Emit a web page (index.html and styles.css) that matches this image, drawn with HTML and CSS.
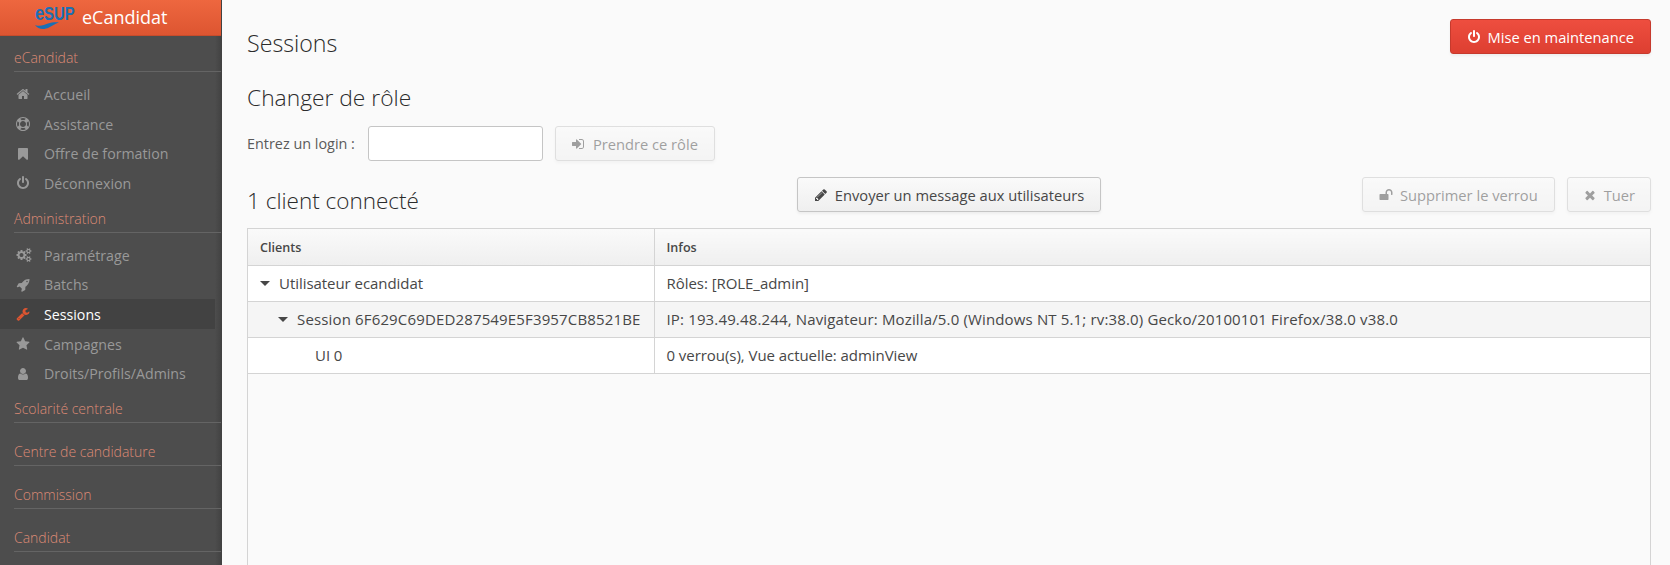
FILE: index.html
```html
<!DOCTYPE html>
<html lang="fr">

<head>
    <meta charset="UTF-8">
    <title>eCandidat</title>
    <link rel="stylesheet" href="styles.css">
</head>

<body>
    <!-- Icones -->
    <svg class="icon-defs" xmlns="http://www.w3.org/2000/svg">
        <symbol id="i-home" viewBox="0 0 1792 1792"><path d="M1472 992v480q0 26-19 45t-45 19h-384v-384h-256v384h-384q-26 0-45-19t-19-45v-480q0-1 .5-3t.5-3l575-474 575 474q1 2 1 6zm223-69l-62 74q-8 9-21 11h-3q-13 0-21-7l-692-577-692 577q-12 8-24 7-13-2-21-11l-62-74q-8-10-7-23.5t11-21.5l719-599q32-26 76-26t76 26l244 204v-195q0-14 9-23t23-9h192q14 0 23 9t9 23v408l219 182q10 8 11 21.5t-7 23.5z"/></symbol>
        <symbol id="i-ring" viewBox="0 0 1792 1792"><path d="M896 0q182 0 348 71t286 191 191 286 71 348-71 348-191 286-286 191-348 71-348-71-286-191-191-286-71-348 71-348 191-286 286-191 348-71zm0 128q-190 0-361 90l194 194q82-28 167-28t167 28l194-194q-171-90-361-90zm-678 1129l194-194q-28-82-28-167t28-167l-194-194q-90 171-90 361t90 361zm678 407q190 0 361-90l-194-194q-82 28-167 28t-167-28l-194 194q171 90 361 90zm0-384q159 0 271.5-112.5t112.5-271.5-112.5-271.5-271.5-112.5-271.5 112.5-112.5 271.5 112.5 271.5 271.5 112.5zm484-217l194 194q90-171 90-361t-90-361l-194 194q28 82 28 167t-28 167z"/></symbol>
        <symbol id="i-bookmark" viewBox="0 0 1792 1792"><path d="M1420 128q23 0 44 9 33 13 52.5 41t19.5 62v1289q0 34-19.5 62t-52.5 41q-19 8-44 8-48 0-83-32l-441-424-441 424q-36 33-83 33-23 0-44-9-33-13-52.5-41t-19.5-62v-1289q0-34 19.5-62t52.5-41q21-9 44-9h1048z"/></symbol>
        <symbol id="i-power" viewBox="0 0 1792 1792"><path d="M1664 896q0 156-61 298t-164 245-245 164-298 61-298-61-245-164-164-245-61-298q0-182 80.5-343t226.5-270q43-32 95.5-25t83.5 50q32 42 24.5 94.5t-49.5 84.5q-98 74-151.5 181t-53.5 228q0 104 40.5 198.5t109.5 163.5 163.5 109.5 198.5 40.5 198.5-40.5 163.5-109.5 109.5-163.5 40.5-198.5q0-121-53.5-228t-151.5-181q-42-32-49.5-84.5t24.5-94.5q31-43 84-50t95 25q146 109 226.5 270t80.5 343zm-640-768v640q0 52-38 90t-90 38-90-38-38-90v-640q0-52 38-90t90-38 90 38 38 90z"/></symbol>
        <symbol id="i-cogs" viewBox="0 0 2048 1792"><path d="M960 896q0-106-75-181t-181-75-181 75-75 181 75 181 181 75 181-75 75-181zm768 512q0-52-38-90t-90-38-90 38-38 90q0 53 37.5 90.5t90.5 37.5 90.5-37.5 37.5-90.5zm0-1024q0-52-38-90t-90-38-90 38-38 90q0 53 37.5 90.5t90.5 37.5 90.5-37.5 37.5-90.5zm-384 421v185q0 10-7 19.5t-16 10.5l-155 24q-11 35-32 76 34 48 90 115 7 11 7 20 0 12-7 19-23 30-82.5 89.5t-78.5 59.5q-11 0-21-7l-115-90q-37 19-77 31-11 108-23 155-7 24-30 24h-186q-11 0-20-7.5t-10-17.5l-23-153q-34-10-75-31l-118 89q-7 7-20 7-11 0-21-8-144-133-144-160 0-9 7-19 10-14 41-53t47-61q-23-44-35-82l-152-24q-10-1-17-9.5t-7-19.5v-185q0-10 7-19.5t16-10.5l155-24q11-35 32-76-34-48-90-115-7-11-7-20 0-12 7-20 22-30 82-89t79-59q11 0 21 7l115 90q34-18 77-32 11-108 23-154 7-24 30-24h186q11 0 20 7.5t10 17.5l23 153q34 10 75 31l118-89q8-7 20-7 11 0 21 8 144 133 144 160 0 8-7 19-12 16-42 54t-45 60q23 48 34 82l152 23q10 2 17 10.5t7 19.5zm640 533v140q0 16-149 31-12 27-30 52 51 113 51 138 0 4-4 7-122 71-124 71-8 0-46-47t-52-68q-20 2-30 2t-30-2q-14 21-52 68t-46 47q-2 0-124-71-4-3-4-7 0-25 51-138-18-25-30-52-149-15-149-31v-140q0-16 149-31 13-29 30-52-51-113-51-138 0-4 4-7 4-2 35-20t59-34 30-16q8 0 46 46.5t52 67.5q20-2 30-2t30 2q51-71 92-112l6-2q4 0 124 70 4 3 4 7 0 25-51 138 17 23 30 52 149 15 149 31zm0-1024v140q0 16-149 31-12 27-30 52 51 113 51 138 0 4-4 7-122 71-124 71-8 0-46-47t-52-68q-20 2-30 2t-30-2q-14 21-52 68t-46 47q-2 0-124-71-4-3-4-7 0-25 51-138-18-25-30-52-149-15-149-31v-140q0-16 149-31 13-29 30-52-51-113-51-138 0-4 4-7 4-2 35-20t59-34 30-16q8 0 46 46.5t52 67.5q20-2 30-2t30 2q51-71 92-112l6-2q4 0 124 70 4 3 4 7 0 25-51 138 17 23 30 52 149 15 149 31z"/></symbol>
        <symbol id="i-rocket" viewBox="0 0 1792 1792"><path d="M1504 448q0-40-28-68t-68-28-68 28-28 68 28 68 68 28 68-28 28-68zm224-288q0 249-75.5 430.5t-253.5 360.5q-81 80-195 176l-20 379q-2 16-16 26l-384 224q-7 4-16 4-12 0-23-9l-64-64q-13-14-8-32l85-276-281-281-276 85q-3 1-9 1-14 0-23-9l-64-64q-17-19-5-39l224-384q10-14 26-16l379-20q96-114 176-195 188-187 358-258t431-71q14 0 24 9.5t10 22.5z"/></symbol>
        <symbol id="i-wrench" viewBox="0 0 1792 1792"><path d="M448 1472q0-26-19-45t-45-19-45 19-19 45 19 45 45 19 45-19 19-45zm644-420l-682 682q-37 37-90 37-52 0-91-37l-106-108q-38-36-38-90 0-53 38-91l681-681q39 98 114.5 173.5t173.5 114.5zm634-435q0 39-23 106-47 134-164.5 217.5t-258.5 83.5q-185 0-316.5-131.5t-131.5-316.5 131.5-316.5 316.5-131.5q58 0 121.5 16.5t107.5 46.5q16 11 16 28t-16 28l-293 169v224l193 107q5-3 79-48.5t135.5-81 70.5-35.5q15 0 23.5 10t8.5 25z"/></symbol>
        <symbol id="i-star" viewBox="0 0 1792 1792"><path d="M1728 647q0 22-26 48l-363 354 86 500q1 7 1 20 0 21-10.5 35.5t-30.5 14.5q-19 0-40-12l-449-236-449 236q-22 12-40 12-21 0-31.5-14.5t-10.5-35.5q0-6 2-20l86-500-364-354q-25-27-25-48 0-37 56-46l502-73 225-455q19-41 49-41t49 41l225 455 502 73q56 9 56 46z"/></symbol>
        <symbol id="i-user" viewBox="0 0 1792 1792"><path d="M1536 1399q0 109-62.5 187t-150.5 78h-854q-88 0-150.5-78t-62.5-187q0-85 8.5-160.5t31.5-152 58.5-131 94-89 134.5-34.5q131 128 313 128t313-128q76 0 134.5 34.5t94 89 58.5 131 31.5 152 8.5 160.5zm-256-887q0 159-112.5 271.5t-271.5 112.5-271.5-112.5-112.5-271.5 112.5-271.5 271.5-112.5 271.5 112.5 112.5 271.5z"/></symbol>
        <symbol id="i-signin" viewBox="0 0 1792 1792"><path d="M1184 896q0 26-19 45l-544 544q-19 19-45 19t-45-19-19-45v-288h-448q-26 0-45-19t-19-45v-384q0-26 19-45t45-19h448v-288q0-26 19-45t45-19 45 19l544 544q19 19 19 45zm352-352v704q0 119-84.5 203.5t-203.5 84.5h-320q-13 0-22.5-9.5t-9.5-22.5q0-4-1-20t-.5-26.5 3-23.5 10-19.5 20.5-6.5h320q66 0 113-47t47-113v-704q0-66-47-113t-113-47h-312l-11.5-1-11.5-3-8-5.5-7-9-2-13.5q0-4-1-20t-.5-26.5 3-23.5 10-19.5 20.5-6.5h320q119 0 203.5 84.5t84.5 203.5z"/></symbol>
        <symbol id="i-pencil" viewBox="0 0 1792 1792"><path d="M491 1536l91-91-235-235-91 91v107h128v128h107zm523-928q0-22-22-22-10 0-17 7l-542 542q-7 7-7 17 0 22 22 22 10 0 17-7l542-542q7-7 7-17zm-54-192l416 416-832 832h-416v-416zm683 96q0 53-37 90l-166 166-416-416 166-165q36-38 90-38 53 0 91 38l235 234q37 39 37 91z"/></symbol>
        <symbol id="i-unlock" viewBox="0 0 1792 1792"><path d="M1728 576v256q0 26-19 45t-45 19h-64q-26 0-45-19t-19-45v-256q0-106-75-181t-181-75-181 75-75 181v192h96q40 0 68 28t28 68v576q0 40-28 68t-68 28h-960q-40 0-68-28t-28-68v-576q0-40 28-68t68-28h672v-192q0-185 131.5-316.5t316.5-131.5 316.5 131.5 131.5 316.5z"/></symbol>
        <symbol id="i-times" viewBox="0 0 1792 1792"><path d="M1490 1322q0 40-28 68l-136 136q-28 28-68 28t-68-28l-294-294-294 294q-28 28-68 28t-68-28l-136-136q-28-28-28-68t28-68l294-294-294-294q-28-28-28-68t28-68l136-136q28-28 68-28t68 28l294 294 294-294q28-28 68-28t68 28l136 136q28 28 28 68t-28 68l-294 294 294 294q28 28 28 68z"/></symbol>
    </svg>

    <div class="app">
        <nav class="sidebar">
            <div class="brand">
                <div class="logo">
                    <span class="logo-text">eSUP</span>
                    <svg class="logo-wave" viewBox="0 0 24 8"><path d="M0 3c5 2 9 0 13-1.500 4-1.500 8-1.500 11-1-4 1-6 3-10 5-5 2.500-11 2-14-2.500z"/></svg>
                </div>
                <span class="brand-name">eCandidat</span>
            </div>

            <div class="nav-section">eCandidat</div>
            <a class="nav-item"><svg class="nav-icon"><use href="#i-home"/></svg>Accueil</a>
            <a class="nav-item"><svg class="nav-icon"><use href="#i-ring"/></svg>Assistance</a>
            <a class="nav-item"><svg class="nav-icon"><use href="#i-bookmark"/></svg>Offre de formation</a>
            <a class="nav-item"><svg class="nav-icon"><use href="#i-power"/></svg>Déconnexion</a>

            <div class="nav-section">Administration</div>
            <a class="nav-item"><svg class="nav-icon nav-icon-wide"><use href="#i-cogs"/></svg>Paramétrage</a>
            <a class="nav-item"><svg class="nav-icon"><use href="#i-rocket"/></svg>Batchs</a>
            <a class="nav-item selected"><svg class="nav-icon"><use href="#i-wrench"/></svg>Sessions</a>
            <a class="nav-item"><svg class="nav-icon"><use href="#i-star"/></svg>Campagnes</a>
            <a class="nav-item"><svg class="nav-icon"><use href="#i-user"/></svg>Droits/Profils/Admins</a>

            <div class="nav-section">Scolarité centrale</div>
            <div class="nav-section closed">Centre de candidature</div>
            <div class="nav-section closed">Commission</div>
            <div class="nav-section closed">Candidat</div>
        </nav>

        <main class="content">
            <div class="top-row">
                <h1>Sessions</h1>
                <button class="btn btn-danger"><svg class="btn-icon"><use href="#i-power"/></svg>Mise en maintenance</button>
            </div>

            <h2>Changer de rôle</h2>
            <div class="login-row">
                <label for="login">Entrez un login :</label>
                <input id="login" type="text">
                <button class="btn" disabled><svg class="btn-icon"><use href="#i-signin"/></svg>Prendre ce rôle</button>
            </div>

            <div class="clients-row">
                <h2 class="clients-title">1 client connecté</h2>
                <button class="btn"><svg class="btn-icon"><use href="#i-pencil"/></svg>Envoyer un message aux utilisateurs</button>
                <div class="clients-actions">
                    <button class="btn" disabled><svg class="btn-icon"><use href="#i-unlock"/></svg>Supprimer le verrou</button>
                    <button class="btn btn-kill" disabled><svg class="btn-icon"><use href="#i-times"/></svg>Tuer</button>
                </div>
            </div>

            <div class="grid-wrap">
                <table class="grid">
                    <thead>
                        <tr>
                            <th class="col-clients">Clients</th>
                            <th>Infos</th>
                        </tr>
                    </thead>
                    <tbody>
                        <tr>
                            <td><span class="tree"><i class="caret"></i>Utilisateur ecandidat</span></td>
                            <td>Rôles: [ROLE_admin]</td>
                        </tr>
                        <tr class="stripe">
                            <td><span class="tree tree-1"><i class="caret"></i>Session 6F629C69DED287549E5F3957CB8521BE</span></td>
                            <td>IP: 193.49.48.244, Navigateur: Mozilla/5.0 (Windows NT 5.1; rv:38.0) Gecko/20100101 Firefox/38.0 v38.0</td>
                        </tr>
                        <tr>
                            <td><span class="tree tree-2">UI 0</span></td>
                            <td>0 verrou(s), Vue actuelle: adminView</td>
                        </tr>
                    </tbody>
                </table>
            </div>
        </main>
    </div>
</body>

</html>
```

FILE: styles.css
```css
html,
body {
    height: 100%;
    margin: 0;
    overflow: hidden;
}

body {
    font-family: 'Open Sans', sans-serif;
    font-size: 14px;
    color: #474747;
    background-color: #fafafa;
}

.icon-defs {
    display: none;
}

.app {
    display: flex;
    height: 100%;
}

/* Menu de gauche */
.sidebar {
    width: 222px;
    flex-shrink: 0;
    background-color: #4d4d4d;
    background-image: linear-gradient(to left, #414141 0, #4d4d4d 7px);
    overflow: hidden;
}

.brand {
    height: 35px;
    width: 221px;
    display: flex;
    align-items: flex-start;
    padding-left: 35px;
    box-sizing: border-box;
    background: linear-gradient(to bottom, #ee673f, #dd5531);
    box-shadow: 0 1px 0 #c74c2c;
    overflow: hidden;
}

.logo {
    width: 40px;
    margin-right: 7px;
    display: flex;
    flex-direction: column;
    align-items: flex-start;
}

.logo-text {
    font-family: 'Liberation Sans', sans-serif;
    font-weight: 700;
    font-size: 19px;
    line-height: 16px;
    margin-top: 5px;
    color: #1b6fb5;
    transform: scaleX(0.78);
    transform-origin: left center;
}

.logo-text::first-letter {
    font-size: 21px;
}

.logo-wave {
    width: 24px;
    height: 8px;
    fill: #1b6fb5;
}

.brand-name {
    font-size: 18px;
    line-height: 35px;
    color: #ffffff;
}

.nav-section {
    margin: 11px 0 7px 14px;
    height: 23px;
    width: 207px;
    font-size: 14px;
    font-weight: 300;
    line-height: 20px;
    color: #dd8a75;
    border-bottom: 1px solid #646464;
}

.brand + .nav-section {
    margin-top: 13px;
}

.nav-section.closed {
    margin-top: 19px;
    margin-bottom: 0;
}

.nav-item {
    display: flex;
    align-items: center;
    height: 29.7px;
    width: 215px;
    padding: 1px 0 0 16px;
    box-sizing: border-box;
    font-size: 14.2px;
    color: #999999;
}

.nav-icon {
    width: 14px;
    height: 14px;
    margin-right: 14px;
    fill: #999999;
}

.nav-icon-wide {
    width: 16px;
    margin-right: 12px;
}

.nav-item.selected {
    color: #ffffff;
    background-color: #424242;
}

.nav-item.selected .nav-icon {
    fill: #dd5531;
}

/* Contenu */
.content {
    flex: 1;
    min-width: 0;
    display: flex;
    flex-direction: column;
    padding: 19px 19px 0 25px;
}

.top-row {
    display: flex;
    justify-content: space-between;
    align-items: flex-start;
}

h1,
h2 {
    margin: 0;
    font-size: 22.8px;
    font-weight: 300;
    line-height: 30px;
    color: #2b2b2b;
}

h1 {
    margin-top: 9px;
    font-size: 23.2px;
}

.top-row + h2 {
    margin-top: 25px;
}

.btn {
    display: inline-flex;
    align-items: center;
    height: 35px;
    padding: 0 16px;
    font-family: inherit;
    font-size: 14.7px;
    color: #474747;
    border: 1px solid #c5c5c5;
    border-radius: 3px;
    background: linear-gradient(to bottom, #fafafa, #efefef);
    box-shadow: 0 2px 3px rgba(0, 0, 0, 0.05);
    white-space: nowrap;
}

.btn:disabled {
    opacity: 0.5;
}

.btn-icon {
    width: 14px;
    height: 14px;
    margin-right: 7px;
    fill: currentColor;
}

.btn-danger {
    color: #ffffff;
    border-color: #c63a2d;
    background: linear-gradient(to bottom, #ee4e3f, #dd3f31);
}

.btn-kill {
    padding: 0 15px;
}

.login-row {
    display: flex;
    align-items: center;
    margin-top: 13px;
}

.login-row label {
    font-size: 14.4px;
    margin-right: 13px;
    color: #5a5a5a;
}

.login-row input {
    width: 175px;
    height: 35px;
    box-sizing: border-box;
    padding: 0 8px;
    background: #ffffff;
    border: 1px solid #c5c5c5;
    border-radius: 3px;
    margin-right: 12px;
}

.clients-row {
    display: grid;
    grid-template-columns: 1fr auto 1fr;
    align-items: start;
    margin-top: 16px;
}

.clients-title {
    margin-top: 9px;
    font-size: 22.5px;
}

.clients-actions {
    display: flex;
    justify-content: flex-end;
    gap: 12px;
}

.grid-wrap {
    margin-top: 12px;
    height: 420px;
    flex-shrink: 0;
    border: 1px solid #d4d4d4;
}

.grid {
    width: 100%;
    border-collapse: collapse;
    table-layout: fixed;
    font-size: 15px;
    letter-spacing: -0.05px;
}

.grid th,
.grid td {
    height: 36px;
    padding: 0 12px;
    box-sizing: border-box;
    text-align: left;
    white-space: nowrap;
    border-bottom: 1px solid #d4d4d4;
    border-left: 1px solid #d4d4d4;
}

.grid th:first-child,
.grid td:first-child {
    border-left: none;
}

.grid th {
    padding-top: 1px;
    font-size: 12.6px;
    font-weight: 600;
    letter-spacing: 0;
    background: linear-gradient(to bottom, #fafafa, #efefef);
}

.grid td {
    background-color: #ffffff;
}

.grid .stripe td {
    letter-spacing: 0.15px;
    background-color: #f5f5f5;
}

.col-clients {
    width: 406px;
}

.tree-1 {
    padding-left: 18px;
}

.tree-2 {
    padding-left: 55px;
}

.caret {
    display: inline-block;
    width: 0;
    height: 0;
    margin-right: 9px;
    vertical-align: 3px;
    border-left: 5px solid transparent;
    border-right: 5px solid transparent;
    border-top: 5.5px solid #474747;
}
```
